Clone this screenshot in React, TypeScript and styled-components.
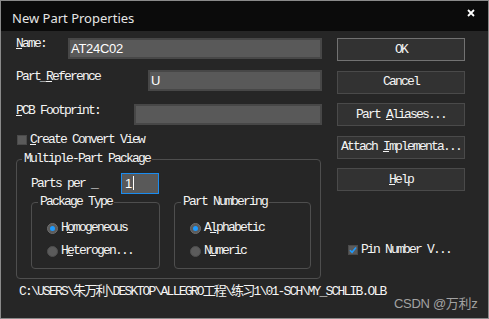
import React from 'react';
import styled, { createGlobalStyle } from 'styled-components';

const GlobalStyle = createGlobalStyle`
  html, body {
    margin: 0;
    padding: 0;
    background: #262626;
  }
  * {
    box-sizing: border-box;
  }
`;

const mono = `"Liberation Mono", "Noto Sans CJK SC", monospace`;

const Window = styled.div`
  position: relative;
  width: 489px;
  height: 319px;
  border: 1px solid #8a8a8a;
  background: #262626;
  color: #f4f4f4;
  font-family: ${mono};
  font-size: 13px;
  line-height: 12px;
  letter-spacing: -1.8px;
  overflow: hidden;
`;

const TitleBar = styled.div`
  height: 30px;
  background: #0b0b0b;
  display: flex;
  align-items: flex-start;
  justify-content: space-between;
  padding: 0 13px 0 11px;
`;

const Title = styled.div`
  padding-top: 9px;
  font-family: "Noto Sans", "Liberation Sans", sans-serif;
  font-size: 13px;
  line-height: 16px;
  letter-spacing: 0;
  color: #e6e6e6;
`;

const CloseIcon = styled.svg`
  margin-top: 8px;
`;

const Body = styled.div`
  display: grid;
  grid-template-columns: 306px 128px;
  column-gap: 15px;
  padding: 7px 0 0 15px;
`;

const Column = styled.div`
  display: flex;
  flex-direction: column;
`;

const FieldRow = styled.div<{ $top?: number }>`
  display: flex;
  align-items: flex-start;
  height: 21px;
  margin-top: ${(p) => p.$top ?? 0}px;
`;

const Label = styled.span<{ $pad?: number }>`
  padding-top: ${(p) => p.$pad ?? 0}px;
  white-space: pre;
`;

const TextField = styled.div<{ $width: number }>`
  width: ${(p) => p.$width}px;
  height: 21px;
  margin-left: auto;
  background: #595959;
  border: 2px solid #474747;
  padding: 1px 0 0 1px;
  font-family: "Liberation Sans", "Noto Sans", sans-serif;
  font-size: 13px;
  line-height: 16px;
  letter-spacing: -0.3px;
  color: #ffffff;
`;

const CheckRow = styled.div<{ $top?: number; $left?: number }>`
  display: flex;
  align-items: center;
  height: 12px;
  margin-top: ${(p) => p.$top ?? 0}px;
  margin-left: ${(p) => p.$left ?? 0}px;
  white-space: pre;
`;

const CheckBox = styled.span`
  width: 10px;
  height: 10px;
  margin-right: 3px;
  background: #5a5a5a;
  border: 1px solid #4a4a4a;
  display: flex;
  align-items: center;
  justify-content: center;
`;

const Group = styled.fieldset<{ $width: number }>`
  width: ${(p) => p.$width}px;
  min-width: 0;
  margin: 0;
  border: 1px solid #4e4e4e;
  border-radius: 4px;
`;

const OuterGroup = styled(Group)`
  margin-top: 7px;
  padding: 8px 0 9px 14px;
`;

const InnerGroup = styled(Group)`
  padding: 12px 0 9px 15px;
`;

const Legend = styled.legend`
  margin-left: -9px;
  padding: 0 2px;
  line-height: 12px;
  white-space: pre;
`;

const PartsRow = styled.div`
  display: flex;
  align-items: center;
  height: 21px;
`;

const PartsInput = styled.div`
  width: 38px;
  height: 21px;
  margin-left: 24px;
  background: #595959;
  border: 1px solid #1a8cf0;
  padding: 2px 0 0 3px;
  display: flex;
  align-items: flex-start;
  font-family: "Liberation Sans", "Noto Sans", sans-serif;
  font-size: 13px;
  line-height: 15px;
  letter-spacing: 0;
  color: #ffffff;
`;

const Caret = styled.span`
  width: 1px;
  height: 14px;
  margin-left: 1px;
  background: #ffffff;
`;

const SubGroups = styled.div`
  display: flex;
  gap: 14px;
  margin-top: 2px;
`;

const RadioList = styled.div`
  display: flex;
  flex-direction: column;
  gap: 7px;
`;

const RadioRow = styled.div`
  display: flex;
  align-items: center;
  height: 16px;
  white-space: pre;
`;

const Radio = styled.span<{ $on?: boolean }>`
  width: 11px;
  height: 11px;
  margin-right: 3px;
  border-radius: 50%;
  background: #5b5b5b;
  border: 1px solid ${(p) => (p.$on ? '#6e6e6e' : '#4f4f4f')};
  display: flex;
  align-items: center;
  justify-content: center;

  &::after {
    content: '';
    display: ${(p) => (p.$on ? 'block' : 'none')};
    width: 5px;
    height: 5px;
    border-radius: 50%;
    background: #1e9bff;
  }
`;

const Button = styled.div<{ $default?: boolean }>`
  height: 23px;
  display: flex;
  align-items: center;
  justify-content: center;
  background: #323232;
  border: 1px solid ${(p) => (p.$default ? '#727272' : '#4a4a4a')};
  white-space: pre;
`;

const ButtonStack = styled.div`
  display: flex;
  flex-direction: column;
  gap: 9.5px;
`;

const PathLine = styled.div`
  grid-column: 1 / span 2;
  margin: 7px 0 0 3px;
  white-space: pre;
`;

const Watermark = styled.div`
  position: absolute;
  left: 393px;
  top: 295px;
  font-family: "Liberation Sans", "Noto Sans CJK SC", sans-serif;
  font-size: 13px;
  line-height: 16px;
  letter-spacing: -0.3px;
  color: #a2a2a2;
`;

const Check = () => (
  <svg width="8" height="8" viewBox="0 0 8 8">
    <path d="M1 4.2 L3.1 6.3 L7 1.6" stroke="#1e9bff" strokeWidth="1.6" fill="none" />
  </svg>
);

const App = () => {
  return (
    <>
      <GlobalStyle />
      <Window>
        <TitleBar>
          <Title>New Part Properties</Title>
          <CloseIcon width="8" height="8" viewBox="0 0 8 8">
            <path d="M1 1 L7 7 M7 1 L1 7" stroke="#ffffff" strokeWidth="1.8" />
          </CloseIcon>
        </TitleBar>
        <Body>
          <Column>
            <FieldRow>
              <Label $pad={0}><u>N</u>ame:</Label>
              <TextField $width={254}>AT24C02</TextField>
            </FieldRow>
            <FieldRow $top={11}>
              <Label $pad={1}>Part_<u>R</u>eference</Label>
              <TextField $width={174}>U</TextField>
            </FieldRow>
            <FieldRow $top={13}>
              <Label $pad={1}><u>P</u>CB Footprint:</Label>
              <TextField $width={188} />
            </FieldRow>
            <CheckRow $top={9} $left={1}>
              <CheckBox />
              <span><u>C</u>reate Convert View</span>
            </CheckRow>
            <OuterGroup $width={305}>
              <Legend>Multiple-Part Package</Legend>
              <PartsRow>
                <Label>Parts per _</Label>
                <PartsInput>
                  1<Caret />
                </PartsInput>
              </PartsRow>
              <SubGroups>
                <InnerGroup $width={129}>
                  <Legend>Package Type</Legend>
                  <RadioList>
                    <RadioRow>
                      <Radio $on />
                      <span>H<u>o</u>mogeneous</span>
                    </RadioRow>
                    <RadioRow>
                      <Radio />
                      <span>H<u>e</u>terogen...</span>
                    </RadioRow>
                  </RadioList>
                </InnerGroup>
                <InnerGroup $width={137}>
                  <Legend>Part Numbering</Legend>
                  <RadioList>
                    <RadioRow>
                      <Radio $on />
                      <span>A<u>l</u>phabetic</span>
                    </RadioRow>
                    <RadioRow>
                      <Radio />
                      <span>N<u>u</u>meric</span>
                    </RadioRow>
                  </RadioList>
                </InnerGroup>
              </SubGroups>
            </OuterGroup>
          </Column>
          <Column>
            <ButtonStack>
              <Button $default>OK</Button>
              <Button>Cancel</Button>
              <Button>Part <u>A</u>liases...</Button>
              <Button>Attach <u>I</u>mplementa...</Button>
              <Button><u>H</u>elp</Button>
            </ButtonStack>
            <CheckRow $top={53} $left={11}>
              <CheckBox>
                <Check />
              </CheckBox>
              <span>Pin Number V...</span>
            </CheckRow>
          </Column>
          <PathLine>C:\USERS\朱万利\DESKTOP\ALLEGRO工程\练习1\01-SCH\MY_SCHLIB.OLB</PathLine>
        </Body>
        <Watermark>CSDN @万利z</Watermark>
      </Window>
    </>
  );
};

export default App;
